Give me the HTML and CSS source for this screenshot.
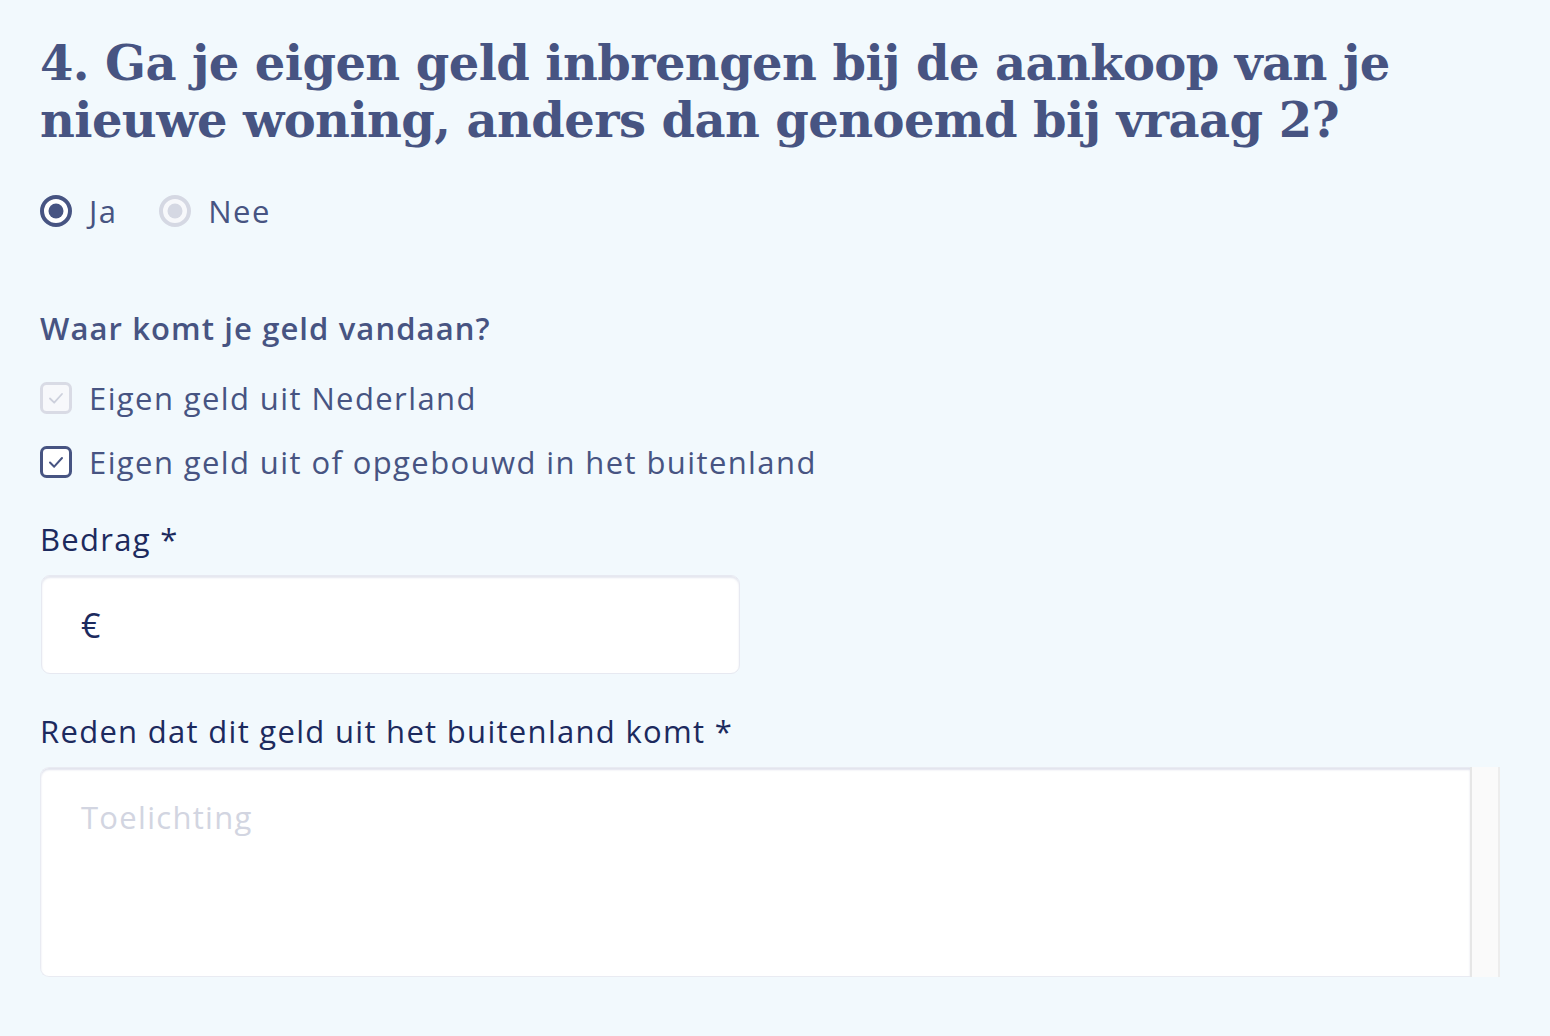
FILE: index.html
```html
<!DOCTYPE html>
<html lang="nl">
<head>
<meta charset="utf-8">
<title>Eigen geld</title>
<link rel="stylesheet" href="styles.css">
</head>
<body>
<main class="page">
  <h1 class="question">4. Ga je eigen geld inbrengen bij de aankoop van je nieuwe woning, anders dan genoemd bij vraag 2?</h1>

  <div class="radios">
    <label class="option">
      <svg class="radio" viewBox="0 0 32 32" width="32" height="32"><circle cx="16" cy="16" r="14" fill="#fff" stroke="#475482" stroke-width="4"/><circle cx="16" cy="16" r="7.5" fill="#475482"/></svg>
      <span>Ja</span>
    </label>
    <label class="option">
      <svg class="radio" viewBox="0 0 32 32" width="32" height="32"><circle cx="16" cy="16" r="14" fill="#f7f8fb" stroke="#d5d8e3" stroke-width="4"/><circle cx="16" cy="16" r="7.5" fill="#d5d8e3"/></svg>
      <span>Nee</span>
    </label>
  </div>

  <h2 class="subhead">Waar komt je geld vandaan?</h2>

  <div class="checks">
    <label class="check-row">
      <svg class="checkbox" viewBox="0 0 32 32" width="32" height="32"><rect x="1.5" y="1.5" width="29" height="29" rx="5" fill="#f7f8fb" stroke="#d9dbe5" stroke-width="3"/><path d="M10 16.5 L14.2 20.7 L22 12" fill="none" stroke="#cdd0dc" stroke-width="1.8" stroke-linecap="round" stroke-linejoin="round"/></svg>
      <span>Eigen geld uit Nederland</span>
    </label>
    <label class="check-row">
      <svg class="checkbox" viewBox="0 0 32 32" width="32" height="32"><rect x="1.5" y="1.5" width="29" height="29" rx="5" fill="#fff" stroke="#475482" stroke-width="3"/><path d="M10 16.5 L14.2 20.7 L22 12" fill="none" stroke="#475482" stroke-width="2" stroke-linecap="round" stroke-linejoin="round"/></svg>
      <span>Eigen geld uit of opgebouwd in het buitenland</span>
    </label>
  </div>

  <div class="field">
    <div class="field-label">Bedrag *</div>
    <div class="input">
      <span class="currency">€</span>
    </div>
  </div>

  <div class="field">
    <div class="field-label">Reden dat dit geld uit het buitenland komt *</div>
    <div class="textarea-wrap">
      <div class="textarea"><span class="placeholder">Toelichting</span></div>
      <div class="scrollbar"></div>
    </div>
  </div>
</main>
</body>
</html>
```

FILE: styles.css
```css
html, body {
  margin: 0;
  padding: 0;
  background: #f2f9fd;
}

body {
  font-family: "Open Sans", "Liberation Sans", sans-serif;
  color: #475482;
}

.page {
  padding: 35px 40px 0 40px;
}

.question {
  margin: 0;
  font-family: "DejaVu Serif", "Liberation Serif", serif;
  font-weight: bold;
  font-size: 48px;
  line-height: 57px;
  color: #475482;
  letter-spacing: -0.6px;
  max-width: 1400px;
}

.radios {
  display: flex;
  gap: 42px;
  margin-top: 46px;
  height: 32px;
}

.option {
  display: flex;
  align-items: center;
  gap: 17px;
  font-size: 31px;
  line-height: 40px;
  letter-spacing: 1.4px;
}

.radio, .checkbox {
  display: block;
  flex: none;
}

.subhead {
  margin: 81px 0 0 0;
  font-size: 31px;
  line-height: 40px;
  font-weight: 600;
  letter-spacing: 1.1px;
  color: #475482;
}

.checks {
  display: flex;
  flex-direction: column;
  gap: 24px;
  margin-top: 30px;
}

.check-row {
  display: flex;
  align-items: center;
  gap: 17px;
  font-size: 31px;
  line-height: 40px;
  letter-spacing: 1.4px;
}

.field {
  margin-top: 37px;
}

.field-label {
  font-size: 31px;
  line-height: 40px;
  letter-spacing: 1.3px;
  color: #1c2a5e;
}

.input {
  margin-top: 16px;
  margin-left: 1px;
  width: 699px;
  height: 99px;
  box-sizing: border-box;
  background: #fff;
  border: 1px solid #e7e9f1;
  border-radius: 9px;
  box-shadow: inset 0 2px 2px rgba(180, 186, 210, 0.35);
  display: flex;
  align-items: center;
  padding-left: 39px;
}

.currency {
  font-size: 34px;
  color: #1c2a5e;
}

.textarea-wrap {
  margin-top: 16px;
  display: flex;
  width: 1460px;
  height: 210px;
}

.textarea {
  flex: 1;
  background: #fff;
  border: 1px solid #e9ebf2;
  border-right: none;
  border-radius: 9px 0 0 9px;
  box-shadow: inset 0 2px 2px rgba(180, 186, 210, 0.4);
  padding: 29px 0 0 40px;
  font-size: 31px;
  line-height: 40px;
  letter-spacing: 1.3px;
}

.placeholder {
  color: #d2d5e1;
}

.scrollbar {
  width: 26px;
  background: #fafafa;
  border-left: 2px solid #e6e6e6;
  border-right: 2px solid #ededed;
}
```
